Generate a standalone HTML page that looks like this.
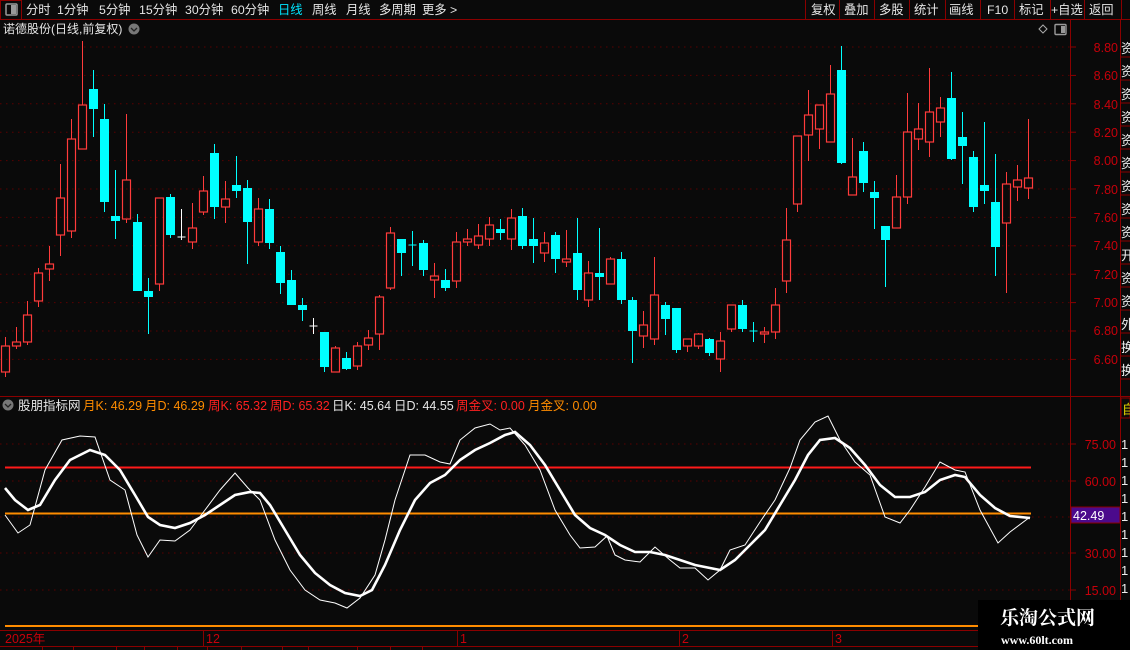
<!DOCTYPE html>
<html><head><meta charset="utf-8">
<style>
html,body{margin:0;padding:0;background:#0a0a0a;width:1130px;height:650px;overflow:hidden}
svg{display:block;font-family:"Liberation Sans","Noto Sans CJK SC",sans-serif}
</style></head><body>
<svg id="s" width="1130" height="650" viewBox="0 0 1130 650" xmlns="http://www.w3.org/2000/svg">
<rect width="1130" height="650" fill="#0a0a0a"/>
<!-- top bar -->
<rect x="0.5" y="0.5" width="21" height="19" fill="none" stroke="#8b0000"/>
<rect x="6" y="4" width="11" height="11" fill="none" stroke="#999" stroke-width="1.5" rx="1"/>
<rect x="11" y="5" width="5" height="9" fill="#999"/>
<line x1="0" y1="19.5" x2="1130" y2="19.5" stroke="#8b0000"/>
<g font-size="12.3" fill="#e6e6e6">
<text x="26" y="14">分时</text><text x="57" y="14">1分钟</text><text x="99" y="14">5分钟</text>
<text x="139" y="14">15分钟</text><text x="185" y="14">30分钟</text><text x="231" y="14">60分钟</text>
<text x="278" y="14" fill="#00e5ff">日线</text><text x="312" y="14">周线</text><text x="346" y="14">月线</text>
<text x="379" y="14">多周期</text><text x="422" y="14">更多 &gt;</text>
<text x="811" y="14">复权</text><text x="844" y="14">叠加</text><text x="879" y="14">多股</text>
<text x="914" y="14">统计</text><text x="949" y="14">画线</text><text x="987" y="14">F10</text>
<text x="1019" y="14">标记</text><text x="1051" y="14">+自选</text><text x="1089" y="14">返回</text>
</g>
<g stroke="#8b0000">
<line x1="805.5" y1="0" x2="805.5" y2="19"/><line x1="839.5" y1="0" x2="839.5" y2="19"/>
<line x1="874.5" y1="0" x2="874.5" y2="19"/><line x1="909.5" y1="0" x2="909.5" y2="19"/>
<line x1="945.5" y1="0" x2="945.5" y2="19"/><line x1="980.5" y1="0" x2="980.5" y2="19"/>
<line x1="1014.5" y1="0" x2="1014.5" y2="19"/><line x1="1050.5" y1="0" x2="1050.5" y2="19"/>
<line x1="1084.5" y1="0" x2="1084.5" y2="19"/><line x1="1121.5" y1="0" x2="1121.5" y2="19"/>
</g>
<!-- title -->
<text x="3" y="33" font-size="12" fill="#e6e6e6">诺德股份(日线,前复权)</text>
<circle cx="134" cy="29" r="5.5" fill="#777"/><path d="M131 28 L134 31 L137 28" stroke="#222" fill="none" stroke-width="1.3"/>
<path d="M1043 25 L1047 29 L1043 33 L1039 29 Z" fill="none" stroke="#aaa"/>
<rect x="1055" y="24.5" width="11" height="10" fill="none" stroke="#999" stroke-width="1.4" rx="1"/><rect x="1061" y="26" width="4" height="7" fill="#999"/>
<!-- axes frames -->
<g stroke="#8b0000">
<line x1="1070.5" y1="20" x2="1070.5" y2="630"/>
<line x1="1120.5" y1="20" x2="1120.5" y2="650"/>
<line x1="0" y1="396.5" x2="1130" y2="396.5"/>
<line x1="0" y1="630.5" x2="1120" y2="630.5"/>
<line x1="0" y1="646.5" x2="1120" y2="646.5"/>
<line x1="203.5" y1="630" x2="203.5" y2="646"/><line x1="457.5" y1="630" x2="457.5" y2="646"/>
<line x1="679.5" y1="630" x2="679.5" y2="646"/><line x1="832.5" y1="630" x2="832.5" y2="646"/>
<line x1="42.5" y1="646" x2="42.5" y2="650"/><line x1="73.5" y1="646" x2="73.5" y2="650"/>
<line x1="116.5" y1="646" x2="116.5" y2="650"/><line x1="144.5" y1="646" x2="144.5" y2="650"/>
<line x1="177.5" y1="646" x2="177.5" y2="650"/><line x1="207.5" y1="646" x2="207.5" y2="650"/>
<line x1="241.5" y1="646" x2="241.5" y2="650"/><line x1="282.5" y1="646" x2="282.5" y2="650"/>
<line x1="308.5" y1="646" x2="308.5" y2="650"/><line x1="357.5" y1="646" x2="357.5" y2="650"/>
<line x1="390.5" y1="646" x2="390.5" y2="650"/><line x1="422.5" y1="646" x2="422.5" y2="650"/>
</g>
<g id="grid"></g>
<g font-size="12.5" fill="#c8000a" text-anchor="end">
<text x="1118" y="52">8.80</text><text x="1118" y="80">8.60</text><text x="1118" y="109">8.40</text>
<text x="1118" y="137">8.20</text><text x="1118" y="165">8.00</text><text x="1118" y="194">7.80</text>
<text x="1118" y="222">7.60</text><text x="1118" y="250">7.40</text><text x="1118" y="279">7.20</text>
<text x="1118" y="307">7.00</text><text x="1118" y="335">6.80</text><text x="1118" y="364">6.60</text>
<text x="1116" y="449">75.00</text><text x="1116" y="486">60.00</text>
<text x="1116" y="558">30.00</text><text x="1116" y="595">15.00</text>
</g>
<g font-size="12.5" fill="#c8000a">
<text x="5" y="643">2025年</text><text x="206" y="643">12</text><text x="460" y="643">1</text>
<text x="682" y="643">2</text><text x="835" y="643">3</text>
</g>
<!-- indicator label -->
<circle cx="8" cy="405" r="5.5" fill="#777"/><path d="M5 404 L8 407 L11 404" stroke="#222" fill="none" stroke-width="1.3"/>
<g font-size="12.5">
<text x="18" y="410" fill="#e6e6e6">股朋指标网</text>
<text x="83" y="410" fill="#ff8c00">月K: 46.29</text>
<text x="145" y="410" fill="#ff8c00">月D: 46.29</text>
<text x="208" y="410" fill="#ff2020">周K: 65.32</text>
<text x="270" y="410" fill="#ff2020">周D: 65.32</text>
<text x="332" y="410" fill="#e6e6e6">日K: 45.64</text>
<text x="394" y="410" fill="#e6e6e6">日D: 44.55</text>
<text x="456" y="410" fill="#ff2020">周金叉: 0.00</text>
<text x="528" y="410" fill="#ff8c00">月金叉: 0.00</text>
</g>
<line x1="5" y1="467.5" x2="1031" y2="467.5" stroke="#ff1a1a" stroke-width="2"/>
<line x1="5" y1="513.5" x2="1031" y2="513.5" stroke="#ff8c00" stroke-width="2"/>
<line x1="5" y1="626" x2="1120" y2="626" stroke="#ff8c00" stroke-width="2"/>
<g id="c"></g>
<polyline id="thin" fill="none" stroke="#fff" stroke-width="1"/>
<polyline id="thick" fill="none" stroke="#fff" stroke-width="2.6"/>
<rect x="1071" y="507" width="49" height="16" fill="#4b0a8c" stroke="#8b0000"/>
<text x="1073" y="520" font-size="12.5" fill="#fff">42.49</text>
<!-- right strip -->
<g id="strip" font-size="13" fill="#eee"></g>
<rect x="1121" y="398" width="9" height="20" fill="#0a0a0a" stroke="#8b0000"/>
<text x="1122" y="414" font-size="13" fill="#e6d800">自</text>
<!-- watermark -->
<rect x="978" y="600" width="152" height="50" fill="#000"/>
<text x="1000" y="624" font-size="19" font-weight="bold" fill="#fff" font-family="'Noto Serif CJK SC','Noto Sans CJK SC',serif">乐淘公式网</text>
<text x="1001" y="644" font-size="12" font-weight="bold" fill="#fff" font-family="'Liberation Serif',serif">www.60lt.com</text>
</svg>
<script>
var NS="http://www.w3.org/2000/svg",s=document.getElementById('s');
function el(p,t,a){var e=document.createElementNS(NS,t);for(var k in a)e.setAttribute(k,a[k]);p.appendChild(e);return e;}
var g=document.getElementById('grid');
for(var k=0;k<12;k++){var y=47+28.4*k;el(g,'line',{x1:0,x2:1070,y1:y,y2:y,stroke:'#5a0000','stroke-dasharray':'1.5 4.5'});el(g,'line',{x1:1070,x2:1076,y1:y,y2:y,stroke:'#8b0000'});}
[444,481,517,553,590].forEach(function(y){el(g,'line',{x1:0,x2:1070,y1:y,y2:y,stroke:'#5a0000','stroke-dasharray':'1.5 4.5'});el(g,'line',{x1:1070,x2:1076,y1:y,y2:y,stroke:'#8b0000'});});
var D=[
['r',346,372,337,377],['r',342,346,327,349],['r',315,342,301,345],['r',273,301,268,307],['r',264,269,246,281],
['r',198,235,164,256],['r',139,231,119,238],['r',105,149,41,149],['c',89,109,70,137],['c',119,202,104,212],
['c',216,221,170,239],['r',180,219,114,223],['c',222,291,214,291],['c',291,297,278,334],['r',198,284,198,291],
['c',197,235,194,238],['w',237,237,209,240],['r',228,242,203,249],['r',191,212,176,215],['c',153,207,144,219],
['r',199,207,181,223],['c',185,191,156,198],['c',188,222,180,264],['r',209,242,198,246],['c',209,243,199,249],
['c',252,283,246,294],['c',280,305,270,305],['c',305,310,298,321],['w',326,326,318,334],['c',332,367,332,372],
['r',348,372,346,372],['c',358,369,352,370],['r',346,366,342,370],['r',338,345,330,350],['r',297,334,295,350],
['r',233,288,227,290],['c',239,253,239,276],['cl',245,245,231,266],['c',243,270,240,276],['r',276,280,263,298],
['c',280,288,269,291],['r',242,281,232,288],['r',239,242,229,246],['r',236,245,224,249],['r',225,239,217,246],
['c',229,233,219,240],['r',218,239,209,250],['c',216,246,208,249],['c',239,246,218,263],['r',243,253,232,262],
['c',235,259,232,273],['r',259,262,230,267],['c',253,290,218,300],['r',273,300,261,307],['c',273,277,228,300],
['r',259,284,257,284],['c',259,300,252,304],['c',300,331,297,363],['r',325,336,311,348],['r',295,339,257,345],
['c',305,319,302,335],['c',308,350,308,353],['r',339,346,339,352],['r',334,346,333,349],['c',339,353,338,356],
['r',341,359,332,372],['r',305,329,305,332],['c',305,329,300,332],['cl',331,331,322,342],['r',332,334,327,343],
['r',305,332,288,339],['r',240,281,208,293],['r',136,204,136,212],['r',115,135,90,161],['r',105,129,105,149],
['r',94,142,65,142],['c',70,163,46,164],['r',177,195,138,195],['c',151,183,142,192],['c',192,198,181,229],
['c',226,240,226,287],['r',197,228,175,228],['r',132,197,93,204],['r',129,139,103,150],['r',112,142,68,157],
['r',108,122,97,137],['c',98,159,72,160],['c',137,146,112,184],['c',157,207,151,212],['c',185,191,122,204],
['c',202,247,154,276],['r',184,223,172,293],['r',180,187,165,201],['r',178,188,119,199]];
var cg=document.getElementById('c');
D.forEach(function(d,i){var x=Math.round(5.3+11*i)+0.5,t=d[0];
 var col=t=='r'?'#ff3b3b':(t=='w'?'#fff':'#00ffff');
 if(t=='r'){el(cg,'line',{x1:x,x2:x,y1:d[3],y2:d[1],stroke:col});el(cg,'line',{x1:x,x2:x,y1:d[2],y2:d[4],stroke:col});
  el(cg,'rect',{x:x-4,y:d[1],width:8,height:Math.max(d[2]-d[1],1),fill:'none',stroke:col,'stroke-width':1.2});}
 else if(t=='c'){el(cg,'line',{x1:x,x2:x,y1:d[3],y2:d[4],stroke:col});
  el(cg,'rect',{x:x-4.5,y:d[1],width:9,height:Math.max(d[2]-d[1],2),fill:col});}
 else {el(cg,'line',{x1:x,x2:x,y1:d[3],y2:d[4],stroke:col});el(cg,'line',{x1:x-4,x2:x+4,y1:d[1],y2:d[1],stroke:col});}
});
document.getElementById('thin').setAttribute('points',"5,515 18,533 30,525 45,470 62,440 80,436 95,437 110,480 125,490 137,535 148,557 160,540 175,541 190,530 205,510 220,490 235,473 248,488 260,500 275,540 290,570 305,590 320,600 335,603 347,608 360,598 375,575 385,540 395,500 410,455 425,455 440,462 450,464 460,440 475,428 490,424 500,430 510,428 525,445 540,470 555,510 570,535 580,548 595,547 607,536 615,555 625,560 640,562 655,547 670,560 680,568 695,568 708,580 720,570 730,550 745,545 760,522 775,500 790,468 800,440 815,422 828,416 840,440 855,462 870,475 885,517 900,523 910,510 925,487 940,462 955,470 965,472 980,510 998,543 1010,532 1030,517");
document.getElementById('thick').setAttribute('points',"5,488 15,500 28,510 40,505 55,480 70,460 90,450 105,455 120,470 135,495 148,517 160,525 175,528 190,523 205,515 220,505 235,495 250,492 260,493 270,505 285,530 300,555 315,573 330,585 345,593 360,596 372,590 385,565 400,530 415,500 430,483 445,475 460,460 475,450 490,443 505,435 515,432 530,445 545,465 560,490 575,515 590,528 605,535 620,545 635,552 650,552 665,555 680,560 695,565 710,568 720,570 735,560 750,545 765,530 780,505 795,480 808,455 820,440 835,438 850,448 865,465 880,485 895,497 910,497 925,492 940,480 955,475 965,477 980,495 995,508 1010,516 1030,518");
var st=document.getElementById('strip');
var ch="资资资资资资资资资开资资外换换".split("");
ch.forEach(function(c,i){var y=47+i*23;var t=el(st,'text',{x:1121,y:y+6});t.textContent=c;el(st,'line',{x1:1121,x2:1130,y1:y+10,y2:y+10,stroke:'#8b0000'});});
for(var i=0;i<10;i++){var t=el(st,'text',{x:1121,y:449+i*18});t.textContent='1';}
</script>
</body></html>
